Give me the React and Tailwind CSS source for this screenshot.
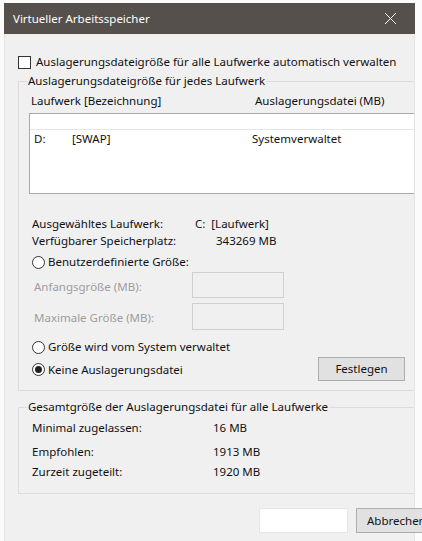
import React from "react";

function Radio({ checked }) {
  return (
    <span className="relative flex h-[13px] w-[13px] shrink-0 items-center justify-center rounded-full border border-[#333] bg-white">
      {checked && <span className="h-[7px] w-[7px] rounded-full bg-[#222]" />}
    </span>
  );
}

function GroupBox({ title, className, children }) {
  return (
    <div className={"border border-r-0 border-[#dcdcdc] " + className}>
      <div className="-mt-[9px] ml-[8px] block h-[16px] w-fit bg-[#f0f0f0] px-[1px] leading-[16px]">{title}</div>
      {children}
    </div>
  );
}

export default function App() {
  return (
    <div className="h-[541px] w-[422px] overflow-hidden bg-[#fbfbfb] pl-[4px] pt-[3px] font-['Segoe_UI','Noto_Sans',sans-serif] text-[11.5px] text-[#111]">
      <div className="flex h-[538px] w-[411px] flex-col">
        {/* title bar */}
        <div className="flex h-[31px] shrink-0 items-center justify-between bg-[#55504c] pl-[9px] pr-[18px] text-white">
          <span>Virtueller Arbeitsspeicher</span>
          <svg width="13" height="13" viewBox="0 0 13 13" className="text-white">
            <path d="M1 1 L12 12 M12 1 L1 12" stroke="currentColor" strokeWidth="1" fill="none" />
          </svg>
        </div>

        {/* dialog body */}
        <div className="flex flex-1 flex-col border-x border-[#e4e4e4] bg-[#f0f0f0] pl-[13px]">
          <label className="mt-[20px] flex h-[16px] items-center gap-[5px]">
            <span className="h-[13px] w-[13px] shrink-0 border border-[#333] bg-white" />
            <span>Auslagerungsdateigröße für alle Laufwerke automatisch verwalten</span>
          </label>

          <GroupBox title="Auslagerungsdateigröße für jedes Laufwerk" className="mt-[11px] h-[310px]">
            <div className="mt-[4px] flex h-[16px] items-center pl-[12px]">
              <span className="w-[224px]">Laufwerk [Bezeichnung]</span>
              <span>Auslagerungsdatei (MB)</span>
            </div>

            {/* drive list */}
            <div className="ml-[10px] mt-[4px] h-[81px] border border-r-0 border-[#a9a9a9] bg-white">
              <div className="h-[16px] border-b border-[#e6e6e6]" />
              <div className="flex h-[18px] items-center pl-[4px]">
                <span className="w-[38px]">D:</span>
                <span className="w-[180px]">[SWAP]</span>
                <span>Systemverwaltet</span>
              </div>
            </div>

            <div className="mt-[21px] flex h-[17px] items-center pl-[13px]">
              <span className="w-[163px]">Ausgewähltes Laufwerk:</span>
              <span>C:&nbsp;&nbsp;[Laufwerk]</span>
            </div>
            <div className="flex h-[17px] items-center pl-[13px]">
              <span className="w-[184px]">Verfügbarer Speicherplatz:</span>
              <span>343269 MB</span>
            </div>

            <div className="mt-[5px] flex h-[16px] items-center gap-[3px] pl-[13px]">
              <Radio />
              <span>Benutzerdefinierte Größe:</span>
            </div>

            <div className="mt-[2px] flex h-[26px] items-center pl-[15px] text-[#9d9d9d]">
              <span className="w-[158px] pt-[3px]">Anfangsgröße (MB):</span>
              <span className="h-[26px] w-[92px] border border-[#d0d0d0] bg-[#f0f0f0]" />
            </div>
            <div className="mt-[5px] flex h-[27px] items-center pl-[15px] text-[#9d9d9d]">
              <span className="w-[158px] pt-[3px]">Maximale Größe (MB):</span>
              <span className="h-[27px] w-[92px] border border-[#d0d0d0] bg-[#f0f0f0]" />
            </div>

            <div className="mt-[9px] flex h-[16px] items-center gap-[3px] pl-[13px]">
              <Radio />
              <span>Größe wird vom System verwaltet</span>
            </div>
            <div className="mt-[2px] flex h-[24px] items-center pl-[13px]">
              <div className="flex flex-1 items-center gap-[3px] pt-[1px]">
                <Radio checked />
                <span>Keine Auslagerungsdatei</span>
              </div>
              <button className="mr-[9px] flex h-[24px] w-[87px] items-center justify-center border border-[#adadad] bg-[#e1e1e1]">
                Festlegen
              </button>
            </div>
          </GroupBox>

          <GroupBox title="Gesamtgröße der Auslagerungsdatei für alle Laufwerke" className="mt-[16px] h-[87px]">
            <div className="mt-[4px] flex h-[17px] items-center pl-[13px]">
              <span className="w-[181px]">Minimal zugelassen:</span>
              <span>16 MB</span>
            </div>
            <div className="mt-[7px] flex h-[17px] items-center pl-[13px]">
              <span className="w-[181px]">Empfohlen:</span>
              <span>1913 MB</span>
            </div>
            <div className="mt-[3px] flex h-[17px] items-center pl-[13px]">
              <span className="w-[181px]">Zurzeit zugeteilt:</span>
              <span>1920 MB</span>
            </div>
          </GroupBox>

          {/* dialog buttons */}
          <div className="mt-[14px] flex h-[25px] items-center pl-[241px]">
            <span className="h-[25px] w-[89px] shrink-0 border border-[#e6e6e6] bg-white" />
            <button className="ml-[8px] flex h-[25px] w-[88px] shrink-0 items-center border border-[#adadad] bg-[#e1e1e1] pl-[10px]">
              Abbrechen
            </button>
          </div>
        </div>
      </div>
    </div>
  );
}
